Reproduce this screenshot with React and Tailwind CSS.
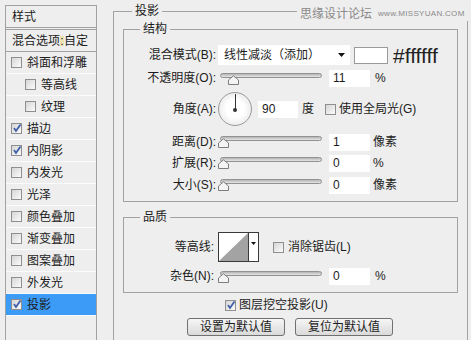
const font = { fontFamily: '"Liberation Sans", "Noto Sans CJK SC", sans-serif' };

function Check({ checked }) {
  return (
    <span className="relative w-[11px] h-[11px] shrink-0 border border-[#8f8f8f] bg-gradient-to-br from-[#d6d6d6] to-[#fbfbfb]">
      {checked && (
        <svg className="absolute left-[0px] top-[-1px]" width="10" height="10" viewBox="0 0 10 10">
          <path d="M2 5 L4 8 L8.5 1.5" fill="none" stroke="#3f5fa8" strokeWidth="1.8" />
        </svg>
      )}
    </span>
  );
}

function StyleRow({ label, checked, indent, active }) {
  return (
    <div
      className={`h-[22px] flex items-center border-b border-[#fbfbfb] ${indent ? "pl-[19px]" : "pl-[5px]"} ${active ? "bg-[#3c9bf7]" : ""}`}
    >
      <Check checked={checked} />
      <span className="ml-[5px] leading-none">{label}</span>
    </div>
  );
}

function Slider({ at = 0 }) {
  return (
    <div className="relative w-[104px] h-full shrink-0 ml-[1px]">
      <div className="absolute left-[2px] right-0 top-[4px] h-[5px] rounded-full border border-[#929292] bg-gradient-to-b from-[#b4b4b4] to-[#e6e6e6]" />
      <svg className="absolute top-[6px]" style={{ left: at }} width="11" height="10" viewBox="0 0 11 10">
        <path d="M0.5 9.5 L0.5 5 L5.5 0.8 L10.5 5 L10.5 9.5 Z" fill="#f4f4f4" stroke="#7d7d7d" />
      </svg>
    </div>
  );
}

function Field({ value, ml = "ml-[7px]" }) {
  return (
    <div className={`${ml} w-[41px] h-[17px] bg-white flex items-center pl-[4px] shrink-0 text-[12px]`}>
      {value}
    </div>
  );
}

function Label({ children }) {
  return <div className="w-[93px] shrink-0 text-right leading-none pr-[1px]">{children}</div>;
}

export default function App() {
  const styles = [
    ["斜面和浮雕", false, false],
    ["等高线", false, true],
    ["纹理", false, true],
    ["描边", true, false],
    ["内阴影", true, false],
    ["内发光", false, false],
    ["光泽", false, false],
    ["颜色叠加", false, false],
    ["渐变叠加", false, false],
    ["图案叠加", false, false],
    ["外发光", false, false],
    ["投影", true, false],
  ];

  return (
    <div
      className="relative w-[471px] h-[340px] overflow-hidden bg-[#eeeeee] flex text-[12px] text-[#1c1c1c]"
      style={font}
    >
      {/* left list */}
      <div className="ml-[5px] mt-[5px] w-[92px] h-[360px] shrink-0 border border-[#a2a2a2] flex flex-col">
        <div className="h-[24px] flex items-center pl-[6px] border-b-[3px] border-double border-[#a2a2a2]">样式</div>
        <div className="h-[22px] flex items-center pl-[6px] border-b border-[#a2a2a2]">
          混合选项<span className="inline-block w-[4px] text-center leading-[10px] bg-[#efe4b0]">:</span>自定
        </div>
        {styles.map(([l, c, i]) => (
          <StyleRow key={l} label={l} checked={c} indent={i} active={l === "投影"} />
        ))}
      </div>

      {/* right panel */}
      <fieldset className="ml-[16px] mt-[3px] w-[355px] h-[360px] shrink-0 border border-[#a2a2a2]">
        <legend className="ml-[18px] px-[3px] leading-[16px]">投影</legend>

        <fieldset className="mt-[2px] ml-[9px] mr-[9px] border border-[#a2a2a2] pb-[6px]">
          <legend className="ml-[16px] px-[3px] leading-[16px]">结构</legend>

          <div className="mt-[8px] h-[20px] flex items-center">
            <Label>混合模式(B):</Label>
            <div className="ml-[1px] w-[132px] h-[20px] bg-white flex items-center pl-[6px] shrink-0">
              <span className="leading-none">线性减淡（添加）</span>
              <svg className="ml-auto mr-[5px]" width="7" height="4" viewBox="0 0 7 4">
                <path d="M0 0 L7 0 L3.5 4 Z" fill="#111" />
              </svg>
            </div>
            <div className="ml-[4px] w-[34px] h-[17px] bg-white border border-[#9a9a9a] shrink-0" />
            <span className="ml-[5px] text-[21px] leading-none text-[#222]">#ffffff</span>
          </div>

          <div className="mt-[4px] h-[18px] flex items-center">
            <Label>不透明度(O):</Label>
            <Slider at={10} />
            <Field value="11" ml="ml-[7px]" />
            <span className="ml-[5px]">%</span>
          </div>

          <div className="mt-[5px] h-[34px] flex items-center">
            <Label>角度(A):</Label>
            <div className="relative ml-[1px] w-[34px] h-[34px] shrink-0 rounded-full border border-[#9a9a9a] bg-[radial-gradient(circle,#ffffff_40%,#dcdcdc_100%)]">
              <div className="absolute left-[15.5px] top-[1px] w-[1px] h-[15px] bg-[#333]" />
              <div className="absolute left-[14px] top-[14.5px] w-[4px] h-[4px] rounded-full bg-[#333]" />
            </div>
            <div className="ml-[6px] w-[40px] h-[17px] bg-white flex items-center pl-[4px] shrink-0">90</div>
            <span className="ml-[4px]">度</span>
            <span className="ml-[11px] flex items-center">
              <Check />
            </span>
            <span className="ml-[3px]">使用全局光(G)</span>
          </div>

          <div className="mt-[6px] h-[20px] flex items-center">
            <Label>距离(D):</Label>
            <Slider />
            <Field value="1" ml="ml-[7px]" />
            <span className="ml-[3px]">像素</span>
          </div>
          <div className="mt-[1px] h-[20px] flex items-center">
            <Label>扩展(R):</Label>
            <Slider />
            <Field value="0" ml="ml-[7px]" />
            <span className="ml-[3px]">%</span>
          </div>
          <div className="mt-[2px] h-[20px] flex items-center">
            <Label>大小(S):</Label>
            <Slider />
            <Field value="0" ml="ml-[7px]" />
            <span className="ml-[3px]">像素</span>
          </div>
        </fieldset>

        <fieldset className="mt-[7px] ml-[9px] mr-[9px] border border-[#a2a2a2] pb-[7px]">
          <legend className="ml-[16px] px-[3px] leading-[16px]">品质</legend>

          <div className="mt-[7px] h-[30px] flex items-center">
            <div className="w-[93px] shrink-0 text-right leading-none pr-[3px]">等高线:</div>
            <div className="ml-[1px] w-[41px] h-[30px] shrink-0 border border-[#3a3a3a] bg-white flex">
              <svg width="29" height="28" viewBox="0 0 29 28">
                <path d="M0 28 L29 0 L29 28 Z" fill="#a3a3a3" />
              </svg>
              <div className="w-[1px] h-full bg-[#3a3a3a]" />
              <div className="flex-1 flex items-start justify-center pt-[9px]">
                <svg width="5" height="3" viewBox="0 0 5 3">
                  <path d="M0 0 L5 0 L2.5 3 Z" fill="#111" />
                </svg>
              </div>
            </div>
            <span className="ml-[14px] flex items-center">
              <Check />
            </span>
            <span className="ml-[4px]">消除锯齿(L)</span>
          </div>

          <div className="mt-[5px] h-[18px] flex items-center">
            <div className="w-[93px] shrink-0 text-right leading-none pr-[3px]">杂色(N):</div>
            <Slider />
            <Field value="0" ml="ml-[7px]" />
            <span className="ml-[5px]">%</span>
          </div>
        </fieldset>

        <div className="mt-[6px] h-[12px] pl-[111px] flex items-center">
          <Check checked />
          <span className="ml-[3px]">图层挖空投影(U)</span>
        </div>

        <div className="mt-[7px] pl-[73px] flex gap-[10px]">
          <button className="w-[98px] h-[18px] rounded-[3px] border border-[#707070] bg-gradient-to-b from-[#f6f6f6] to-[#dadada] text-[12px] leading-none">
            设置为默认值
          </button>
          <button className="w-[98px] h-[18px] rounded-[3px] border border-[#707070] bg-gradient-to-b from-[#f6f6f6] to-[#dadada] text-[12px] leading-none">
            复位为默认值
          </button>
        </div>
      </fieldset>

      {/* watermark */}
      <div className="absolute left-[297px] top-[7px] bg-[#eeeeee] pl-[3px] pr-[3px] flex items-center text-[#8a8a8a] h-[14px]">
        <span className="text-[12px] leading-none">思缘设计论坛</span>
        <span className="ml-[6px] text-[8px] leading-none tracking-[0.3px]">www.MISSYUAN.COM</span>
      </div>
    </div>
  );
}
